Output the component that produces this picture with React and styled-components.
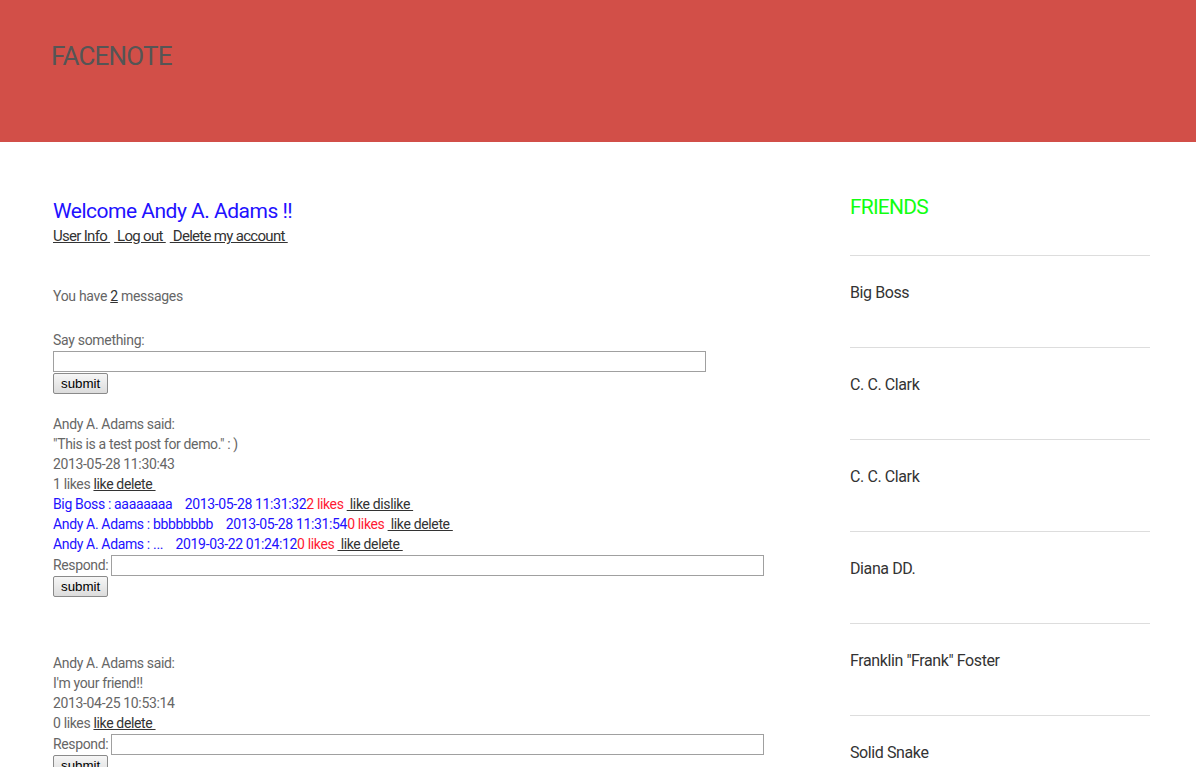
import * as React from 'react';
import styled, { createGlobalStyle } from 'styled-components';

const GlobalStyle = createGlobalStyle`
  body {
    margin: 0;
    background: #ffffff;
    font-family: "Roboto", "Open Sans", sans-serif;
    color: #666666;
  }
`;

const Header = styled.header`
  height: 142px;
  background: #d24f48;
  padding: 40px 0 0 51px;
  box-sizing: border-box;
`;

const Logo = styled.h1`
  margin: 0;
  font-size: 26px;
  line-height: 32px;
  font-weight: 400;
  color: #555555;
  letter-spacing: -0.8px;
`;

const Main = styled.div`
  display: flex;
  padding: 54px 0 0 53px;
`;

const LeftColumn = styled.div`
  width: 797px;
`;

const RightColumn = styled.aside`
  width: 300px;
`;

const Welcome = styled.h2`
  margin: 0;
  font-size: 21px;
  font-weight: 400;
  letter-spacing: -0.5px;
  color: #2211ff;
  line-height: 30px;
`;

const NavRow = styled.div`
  display: flex;
  gap: 4px;
  line-height: 20px;
`;

const NavLink = styled.a`
  color: #333333;
  text-decoration: underline;
  font-size: 15px;
  letter-spacing: -0.7px;
  white-space: pre;
`;

const Count = styled.p`
  margin: 40px 0 0;
  font-size: 14px;
  line-height: 20px;
  letter-spacing: -0.3px;
  a { color: #333333; }
`;

const Label = styled.div`
  margin-top: 24px;
  font-size: 14px;
  letter-spacing: -0.3px;
  line-height: 20px;
`;

const TextInput = styled.input`
  display: block;
  width: ${(p) => p.width};
  height: 21px;
  box-sizing: border-box;
  border: 1px solid #a0a0a0;
  margin: 1px 0 0;
`;

const RespondRow = styled.div`
  display: flex;
  align-items: center;
  gap: 3px;
  height: 21px;
`;

const Button = styled.button`
  display: block;
  height: 21px;
  font-family: "Liberation Sans", Arial, sans-serif;
  font-size: 13.33px;
  padding: 0 7px;
  margin: 1px 0 0;
  border: 1px solid #8a8a8a;
  border-radius: 2px;
  background: linear-gradient(#f6f6f6, #dcdcdc);
  color: #000;
`;

const Post = styled.div`
  margin-top: ${(p) => p.gap};
  font-size: 14px;
  letter-spacing: -0.35px;
  line-height: 20px;
`;

const Link = styled.a`
  color: #333333;
  text-decoration: underline;
  white-space: pre;
`;

const Comment = styled.div`
  color: #2211ff;
  white-space: pre;
`;

const Likes = styled.span`
  color: #ff1a33;
`;

const FriendsTitle = styled.h3`
  margin: -4px 0 0;
  font-size: 21px;
  font-weight: 400;
  letter-spacing: -0.8px;
  color: #11ff11;
  line-height: 30px;
  padding-bottom: 33px;
  border-bottom: 1px solid #dddddd;
`;

const Friend = styled.div`
  height: 92px;
  padding-top: 27px;
  box-sizing: border-box;
  border-bottom: 1px solid #dddddd;
  font-size: 16px;
  letter-spacing: -0.4px;
  line-height: 20px;
  color: #333333;
`;

const posts = [
  {
    author: 'Andy A. Adams',
    text: '"This is a test post for demo." : )',
    date: '2013-05-28 11:30:43',
    likes: 1,
    comments: [
      { who: 'Big Boss : aaaaaaaa', date: '2013-05-28 11:31:32', likes: 2, actions: ' like dislike ' },
      { who: 'Andy A. Adams : bbbbbbbb', date: '2013-05-28 11:31:54', likes: 0, actions: ' like delete ' },
      { who: 'Andy A. Adams : ...', date: '2019-03-22 01:24:12', likes: 0, actions: ' like delete ' },
    ],
  },
  {
    author: 'Andy A. Adams',
    text: "I'm your friend!!",
    date: '2013-04-25 10:53:14',
    likes: 0,
    comments: [],
  },
];

const friends = ['Big Boss', 'C. C. Clark', 'C. C. Clark', 'Diana DD.', 'Franklin "Frank" Foster', 'Solid Snake'];

const App = () => (
  <>
    <GlobalStyle />
    <Header>
      <Logo>FACENOTE</Logo>
    </Header>
    <Main>
      <LeftColumn>
        <Welcome>Welcome Andy A. Adams !!</Welcome>
        <NavRow>
          <NavLink href="#">User Info </NavLink>
          <NavLink href="#"> Log out </NavLink>
          <NavLink href="#"> Delete my account </NavLink>
        </NavRow>
        <Count>
          You have <a href="#">2</a> messages
        </Count>
        <Label>Say something:</Label>
        <TextInput type="text" width="653px" />
        <Button type="button">submit</Button>
        {posts.map((post, i) => (
          <Post key={i} gap={i === 0 ? '20px' : '56px'}>
            <div>{post.author} said:</div>
            <div>{post.text}</div>
            <div>{post.date}</div>
            <div>
              {post.likes} likes <Link href="#">like delete </Link>
            </div>
            {post.comments.map((c, j) => (
              <Comment key={j}>
                {c.who}{'    '}{c.date}
                <Likes>{c.likes} likes</Likes>{' '}
                <Link href="#">{c.actions}</Link>
              </Comment>
            ))}
            <RespondRow>
              Respond:
              <TextInput type="text" width="653px" />
            </RespondRow>
            <Button type="button">submit</Button>
          </Post>
        ))}
      </LeftColumn>
      <RightColumn>
        <FriendsTitle>FRIENDS</FriendsTitle>
        {friends.map((f, i) => (
          <Friend key={i}>{f}</Friend>
        ))}
      </RightColumn>
    </Main>
  </>
);

export default App;
